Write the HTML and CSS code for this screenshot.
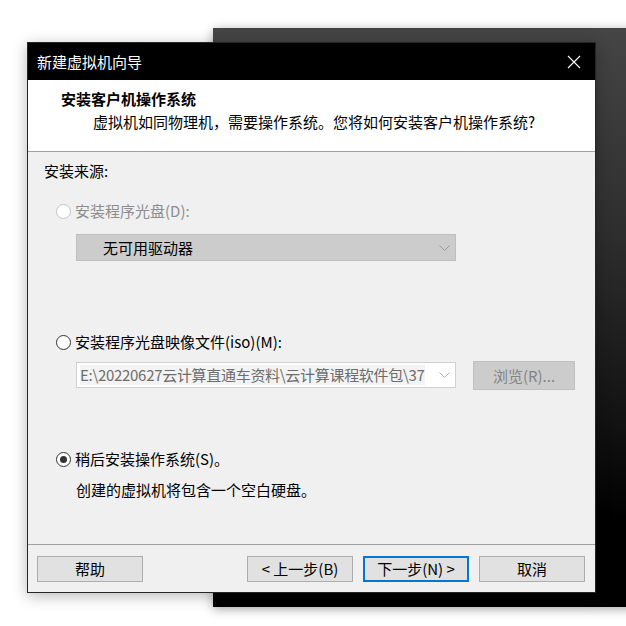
FILE: index.html
```html
<!DOCTYPE html>
<html lang="zh-CN">
<head>
<meta charset="utf-8">
<title>新建虚拟机向导</title>
<link rel="stylesheet" href="styles.css">
</head>
<body>
<div class="desktop">
  <div class="back-window"></div>
  <div class="dialog">
    <div class="titlebar">
      <span class="title">新建虚拟机向导</span>
      <svg class="close" width="14" height="14" viewBox="0 0 14 14"><path d="M1 1 L13 13 M13 1 L1 13" stroke="#fff" stroke-width="1.1" fill="none"/></svg>
    </div>
    <div class="header">
      <div class="h-title">安装客户机操作系统</div>
      <div class="h-sub">虚拟机如同物理机，需要操作系统。您将如何安装客户机操作系统?</div>
    </div>
    <div class="body">
      <div class="label">安装来源:</div>
      <div class="radio-row disabled first">
        <span class="radio"></span><span>安装程序光盘(D):</span>
      </div>
      <div class="combo combo-disabled">
        <span class="combo-text">无可用驱动器</span>
        <svg class="chev" width="11" height="6" viewBox="0 0 11 6"><path d="M0.5 0.5 L5.5 5.5 L10.5 0.5" stroke="#9a9a9a" fill="none"/></svg>
      </div>
      <div class="radio-row second">
        <span class="radio"></span><span>安装程序光盘映像文件(iso)(M):</span>
      </div>
      <div class="iso-row">
        <div class="combo combo-iso">
          <span class="combo-text path">E:\20220627云计算直通车资料\云计算课程软件包\37</span>
          <svg class="chev" width="11" height="6" viewBox="0 0 11 6"><path d="M0.5 0.5 L5.5 5.5 L10.5 0.5" stroke="#b4b4b4" fill="none"/></svg>
        </div>
        <div class="btn btn-disabled">浏览(R)...</div>
      </div>
      <div class="radio-row third">
        <span class="radio checked"></span><span>稍后安装操作系统(S)。</span>
      </div>
      <div class="desc">创建的虚拟机将包含一个空白硬盘。</div>
    </div>
    <div class="footer">
      <div class="btn">帮助</div>
      <div class="spacer"></div>
      <div class="btn">&lt; 上一步(B)</div>
      <div class="btn btn-default">下一步(N) &gt;</div>
      <div class="btn">取消</div>
    </div>
  </div>
</div>
</body>
</html>
```

FILE: styles.css
```css
html, body {
  margin: 0;
  padding: 0;
  background: #ffffff;
}

body {
  font-family: "Noto Sans CJK SC", "Microsoft YaHei", sans-serif;
  font-size: 15px;
  color: #000;
}

.desktop {
  position: relative;
  width: 626px;
  height: 626px;
  overflow: hidden;
  background: #ffffff;
}

.back-window {
  position: absolute;
  left: 213px;
  top: 28px;
  width: 440px;
  height: 579px;
  background: linear-gradient(180deg, #454545 0%, #2e2e2e 35%, #121212 68%, #000000 85%);
  box-shadow: 0 2px 10px rgba(0, 0, 0, 0.35);
}

.dialog {
  position: absolute;
  left: 27px;
  top: 42px;
  width: 567px;
  height: 549px;
  border: 1px solid #262626;
  background: #f0f0f0;
  display: flex;
  flex-direction: column;
  box-shadow: 0 3px 14px rgba(0, 0, 0, 0.28);
}

.titlebar {
  height: 37px;
  background: #000;
  color: #fff;
  display: flex;
  align-items: center;
  justify-content: space-between;
  padding: 0 14px 0 9px;
  flex-shrink: 0;
}

.title {
  font-size: 15px;
  line-height: 20px;
}

.close {
  display: block;
}

.header {
  height: 72px;
  background: #fff;
  border-bottom: 1px solid #a0a0a0;
  padding: 9px 0 0 33px;
  box-sizing: border-box;
  flex-shrink: 0;
}

.h-title {
  font-weight: bold;
  line-height: 20px;
}

.h-sub {
  line-height: 20px;
  margin: 3px 0 0 32px;
}

.body {
  flex: 1;
  padding: 9px 0 0 16px;
  border-bottom: 1px solid #a0a0a0;
  box-sizing: border-box;
}

.label {
  line-height: 20px;
}

.radio-row {
  display: flex;
  align-items: center;
  gap: 4px;
  height: 20px;
  line-height: 20px;
  margin-left: 12px;
}

.radio-row.first { margin-top: 20px; }
.radio-row.second { margin-top: 71px; }
.radio-row.third { margin-top: 59px; }

.radio {
  width: 13px;
  height: 13px;
  border: 1px solid #333;
  border-radius: 50%;
  background: #fff;
  position: relative;
  box-sizing: content-box;
  flex-shrink: 0;
}

.radio.checked::after {
  content: "";
  position: absolute;
  left: 3px;
  top: 3px;
  width: 7px;
  height: 7px;
  border-radius: 50%;
  background: #333;
}

.radio-row.disabled {
  color: #8d8d8d;
}

.radio-row.disabled .radio {
  border-color: #c4c4c4;
  background: #fff;
}

.combo {
  height: 25px;
  box-sizing: border-box;
  display: flex;
  align-items: center;
  justify-content: space-between;
  position: relative;
}

.combo-disabled {
  width: 380px;
  margin: 13px 0 0 32px;
  height: 27px;
  background: #cccccc;
  border: 1px solid #bfbfbf;
  padding: 0 5px 0 26px;
}

.combo-text {
  line-height: 20px;
  white-space: nowrap;
}

.chev {
  flex-shrink: 0;
  margin-right: 0;
}

.iso-row {
  display: flex;
  align-items: flex-start;
  margin: 9px 0 0 32px;
}

.combo-iso {
  width: 380px;
  height: 26px;
  margin-top: 1px;
  background: #fff;
  border: 1px solid #d0d0d0;
  padding: 0 5px 0 3px;
}

.combo-iso .path {
  color: #6d6d6d;
  background: #f3f3f3;
  letter-spacing: -0.3px;
}

.btn {
  width: 106px;
  height: 26px;
  box-sizing: border-box;
  background: #e1e1e1;
  border: 1px solid #adadad;
  display: flex;
  align-items: center;
  justify-content: center;
  line-height: 20px;
  flex-shrink: 0;
}

.btn-disabled {
  width: 102px;
  height: 29px;
  margin-left: 17px;
  background: #cccccc;
  border-color: #bfbfbf;
  color: #838383;
}

.btn-default {
  border: 2px solid #0078d7;
}

.desc {
  line-height: 20px;
  margin: 11px 0 0 32px;
}

.footer {
  height: 47px;
  flex-shrink: 0;
  display: flex;
  align-items: flex-start;
  padding: 11px 10px 0 9px;
  box-sizing: border-box;
  gap: 10px;
}

.spacer {
  flex: 1;
}
```
